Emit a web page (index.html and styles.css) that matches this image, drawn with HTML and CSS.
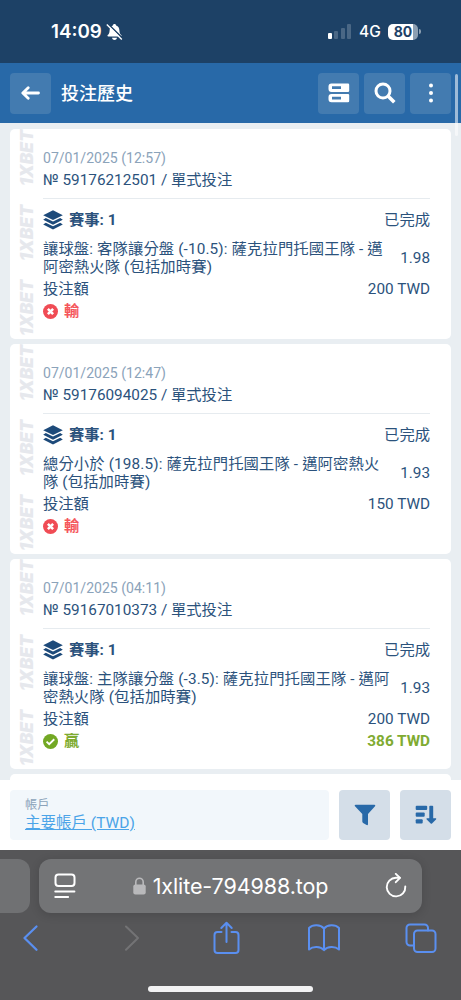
FILE: index.html
```
<!DOCTYPE html>
<html lang="zh-Hant">

<head>
    <meta charset="UTF-8">
    <meta name="viewport" content="width=device-width, initial-scale=1.0">
    <title>投注歷史</title>
    <link rel="stylesheet" href="styles.css">
</head>

<body>
    <!-- Shared icons -->
    <svg class="sprite">
        <symbol id="layers" viewBox="0 0 20 20">
            <path d="M10 .3 19.800 5.200 10 10.100.2 5.200z" />
            <path d="M2.800 8 .2 9.700 10 14.700l9.800-5L17.200 8 10 11.600z" />
            <path d="M2.800 12.700.2 14.500 10 19.500l9.800-5-2.600-1.800L10 16.300z" />
        </symbol>
        <symbol id="lost" viewBox="0 0 16 16">
            <circle cx="8" cy="8" r="8" />
            <path d="M5.200 5.200l5.600 5.600M10.800 5.200l-5.600 5.600" fill="none" stroke="#fff" stroke-width="2.700" />
        </symbol>
        <symbol id="won" viewBox="0 0 16 16">
            <circle cx="8" cy="8" r="8" />
            <path d="M3.800 8.200l2.800 2.700 5.400-5.300" fill="none" stroke="#fff" stroke-width="2" />
        </symbol>
    </svg>

    <!-- Status bar -->
    <div class="status-bar">
        <span class="clock">14:09</span>
        <svg class="bell" width="17" height="18" viewBox="0 0 17 18">
            <path d="M8.500 1c.9 0 1.500.6 1.600 1.400 2.200.7 3.200 2.600 3.300 5 .1 3 .9 3.700 1.900 4.700.5.6.2 1.500-.6 1.500H2.300c-.8 0-1.100-.9-.6-1.500 1-1 1.800-1.700 1.900-4.700.1-2.400 1.100-4.300 3.300-5C7 1.600 7.600 1 8.500 1z" fill="#fff" />
            <path d="M6 14.700h5c-.3 1.500-1.300 2.200-2.500 2.200S6.300 16.200 6 14.700z" fill="#fff" />
            <path d="M2.200 1 17 15.600" stroke="#1d4166" stroke-width="1.600" />
            <path d="M.8 1.600 15.800 16.400" stroke="#fff" stroke-width="1.400" />
        </svg>
        <div class="signal">
            <i class="bar on"></i><i class="bar b2"></i><i class="bar b3"></i><i class="bar b4"></i>
        </div>
        <span class="network">4G</span>
        <span class="battery">80</span>
        <span class="battery-tip"></span>
    </div>

    <!-- Header -->
    <div class="header">
        <button class="head-btn">
            <svg width="20" height="16" viewBox="0 0 20 16" fill="none" stroke="#fff" stroke-width="2.800" stroke-linecap="round" stroke-linejoin="round">
                <path d="M17.500 8H2.500M7.200 2.800 1.800 8l5.400 5.200" />
            </svg>
        </button>
        <h1>投注歷史</h1>
        <button class="head-btn">
            <svg width="22" height="20" viewBox="0 0 22 20" fill="#fff" fill-rule="evenodd">
                <path d="M3.500.5H20a1.200 1.200 0 0 1 1.200 1.200v6a1.200 1.200 0 0 1-1.200 1.200H3.500a3 3 0 0 1-3-3V3.500a3 3 0 0 1 3-3zM4 3.300h9v2.600H4z" />
                <path d="M3.500 10.900H20a1.200 1.200 0 0 1 1.200 1.200v6a1.200 1.200 0 0 1-1.200 1.200H3.500a3 3 0 0 1-3-3v-2.400a3 3 0 0 1 3-3zM4 13.800h9v2.600H4z" />
            </svg>
        </button>
        <button class="head-btn">
            <svg width="22" height="22" viewBox="0 0 22 22" fill="none" stroke="#fff" stroke-width="3">
                <circle cx="9" cy="9" r="7" />
                <path d="M14 14l6.300 6.300" stroke-width="3.600" />
            </svg>
        </button>
        <button class="head-btn">
            <svg width="6" height="22" viewBox="0 0 6 22" fill="#fff">
                <circle cx="3" cy="3.500" r="2" />
                <circle cx="3" cy="11" r="2" />
                <circle cx="3" cy="18.500" r="2" />
            </svg>
        </button>
        <div class="scrollbar"></div>
    </div>

    <!-- Bet list -->
    <div class="bets">
        <div class="card">
            <div class="brand"><span>1XBET</span><span>1XBET</span><span>1XBET</span></div>
            <div class="bet">
                <div class="date">07/01/2025 (12:57)</div>
                <div class="number">№ 59176212501 / 單式投注</div>
                <div class="row events">
                    <svg class="layers"><use href="#layers" /></svg>
                    <b>賽事: 1</b>
                    <span class="value">已完成</span>
                </div>
                <div class="row market">
                    <p>讓球盤: 客隊讓分盤 (-10.5): 薩克拉門托國王隊 - 邁<br>阿密熱火隊 (包括加時賽)</p>
                    <span class="value">1.98</span>
                </div>
                <div class="row">投注額<span class="value">200 TWD</span></div>
                <div class="row result lose"><svg class="mark"><use href="#lost" /></svg>輸</div>
            </div>
        </div>

        <div class="card">
            <div class="brand"><span>1XBET</span><span>1XBET</span><span>1XBET</span></div>
            <div class="bet">
                <div class="date">07/01/2025 (12:47)</div>
                <div class="number">№ 59176094025 / 單式投注</div>
                <div class="row events">
                    <svg class="layers"><use href="#layers" /></svg>
                    <b>賽事: 1</b>
                    <span class="value">已完成</span>
                </div>
                <div class="row market">
                    <p>總分小於 (198.5): 薩克拉門托國王隊 - 邁阿密熱火<br>隊 (包括加時賽)</p>
                    <span class="value">1.93</span>
                </div>
                <div class="row">投注額<span class="value">150 TWD</span></div>
                <div class="row result lose"><svg class="mark"><use href="#lost" /></svg>輸</div>
            </div>
        </div>

        <div class="card">
            <div class="brand"><span>1XBET</span><span>1XBET</span><span>1XBET</span></div>
            <div class="bet">
                <div class="date">07/01/2025 (04:11)</div>
                <div class="number">№ 59167010373 / 單式投注</div>
                <div class="row events">
                    <svg class="layers"><use href="#layers" /></svg>
                    <b>賽事: 1</b>
                    <span class="value">已完成</span>
                </div>
                <div class="row market">
                    <p>讓球盤: 主隊讓分盤 (-3.5): 薩克拉門托國王隊 - 邁阿<br>密熱火隊 (包括加時賽)</p>
                    <span class="value">1.93</span>
                </div>
                <div class="row">投注額<span class="value">200 TWD</span></div>
                <div class="row result win"><svg class="mark"><use href="#won" /></svg>贏<span class="value">386 TWD</span></div>
            </div>
        </div>

        <div class="card"></div>
    </div>

    <!-- Account / filters -->
    <div class="filters">
        <div class="account">
            <span class="label">帳戶</span>
            <a>主要帳戶 (TWD)</a>
        </div>
        <button class="filter-btn">
            <svg width="22" height="22" viewBox="0 0 22 22" fill="#2869a8">
                <path d="M1.600.8h18.800c.9 0 1.200.8.6 1.500l-7 7.700v10.200c0 .8-.7 1.200-1.400.8l-3.500-2c-.5-.3-.8-.8-.8-1.400V10L1 2.300C.4 1.600.700.8 1.600.8z" />
            </svg>
        </button>
        <button class="filter-btn">
            <svg width="22" height="20" viewBox="0 0 22 20" fill="#2869a8">
                <rect x=".7" y=".8" width="11.500" height="4.200" rx="1" />
                <rect x=".7" y="7.500" width="9" height="4.200" rx="1" />
                <rect x=".7" y="14.200" width="7" height="4.200" rx="1" />
                <path d="M14.300 1.600c0-.5.3-.8.8-.8h2.300c.5 0 .8.3.8.8v11.700h2.300c.8 0 1 .7.500 1.200l-4 4c-.4.400-.9.400-1.300 0l-4-4c-.5-.5-.2-1.200.5-1.200h2.100z" />
            </svg>
        </button>
    </div>

    <!-- Browser chrome -->
    <div class="browser">
        <div class="address-row">
            <div class="prev-tab"></div>
            <div class="address">
                <svg width="22" height="26" viewBox="0 0 22 26" fill="none" stroke="#fff" stroke-width="2" stroke-linecap="round">
                    <rect x="1.500" y="1.500" width="19" height="11.500" rx="3" />
                    <path d="M1.200 18.500h19.300M1.200 24h13" stroke-width="1.800" />
                </svg>
                <div class="url">
                    <svg width="13" height="18" viewBox="0 0 13 18">
                        <rect x=".3" y="7.500" width="12.400" height="10" rx="2" fill="#b9b9bb" />
                        <path d="M2.800 8V5a3.700 3.700 0 0 1 7.400 0v3" fill="none" stroke="#b9b9bb" stroke-width="1.600" />
                    </svg>
                    <span>1xlite-794988.top</span>
                </div>
                <svg width="22" height="26" viewBox="0 0 22 26" fill="none" stroke="#fff" stroke-width="1.900" stroke-linecap="round" stroke-linejoin="round">
                    <path d="M20.300 13.500a9.300 9.300 0 1 1-9.300-8.700h3.700" />
                    <path d="M10.800.9l4.200 4-4.200 4.300" />
                </svg>
            </div>
        </div>
        <div class="toolbar">
            <svg viewBox="0 0 32 34"><path d="M21.500 5.500 9.500 17l12 11.800" stroke-width="2.300" /></svg>
            <svg viewBox="0 0 32 34" class="off"><path d="M13 5.500 25 17 13 28.800" /></svg>
            <svg viewBox="0 0 32 34">
                <path d="M11.500 11H7.500a3 3 0 0 0-3 3v15a3 3 0 0 0 3 3h18a3 3 0 0 0 3-3V14a3 3 0 0 0-3-3h-4M16.500 21V2M11.300 7l5.200-5.200L21.700 7" />
            </svg>
            <svg viewBox="0 0 32 34">
                <path d="M16 7.500C12.500 3.500 5 3 1 7v21.500c4-3.500 11.500-3.300 15 .7 3.500-4 11-4.200 15-.7V7c-4-4-11.500-3.500-15 .5zM16 7.500v21.500" />
            </svg>
            <svg viewBox="0 0 32 34">
                <rect x="9" y="9.500" width="21.500" height="21.500" rx="3.500" />
                <path d="M9 24.500H5A3.500 3.500 0 0 1 1.500 21V7A3.500 3.500 0 0 1 5 3.500h14.500A3.500 3.500 0 0 1 23 7v2.500" />
            </svg>
        </div>
        <div class="home-indicator"></div>
    </div>
</body>

</html>
```
FILE: styles.css
```
* {
    box-sizing: border-box;
}

body {
    font-family: Roboto, "Noto Sans CJK TC", sans-serif;
    width: 461px;
    height: 1000px;
    margin: 0;
    display: flex;
    flex-direction: column;
    overflow: hidden;
    background: #e9eef2;
    color: #2b527c;
    font-size: 15.3px;
}

.sprite {
    display: none;
}

button {
    border: none;
    padding: 0;
    display: flex;
    align-items: center;
    justify-content: center;
}

/* Status bar */
.status-bar {
    height: 63px;
    flex: none;
    display: flex;
    align-items: center;
    padding: 0 40px 0 51px;
    background: #1d4166;
    color: white;
    font-family: Inter, sans-serif;
}

.clock {
    font-size: 18.8px;
    font-weight: 600;
    width: 51px;
    white-space: nowrap;
}

.bell {
    margin-left: 4px;
}

.signal {
    display: flex;
    align-items: flex-end;
    gap: 2.5px;
    height: 15px;
    margin-left: auto;
}

.bar {
    width: 4px;
    height: 6px;
    border-radius: 1px;
    background: #4a6785;
}

.bar.on {
    background: white;
}

.b2 {
    height: 8px;
}

.b3 {
    height: 11px;
}

.b4 {
    height: 15px;
}

.network {
    margin-left: 8px;
    width: 21px;
    font-size: 15.5px;
    font-weight: 500;
}

.battery {
    width: 30px;
    height: 16px;
    margin-left: 8px;
    border-radius: 5px;
    background: linear-gradient(90deg, white 25px, #8c9fb2 25px);
    color: #1d4166;
    font-size: 14px;
    font-weight: 700;
    line-height: 16px;
    text-align: center;
}

.battery-tip {
    width: 2px;
    height: 5px;
    margin-left: 1px;
    border-radius: 0 2px 2px 0;
    background: #8c9fb2;
}

/* Header */
.header {
    position: relative;
    height: 60px;
    flex: none;
    display: flex;
    align-items: center;
    gap: 5px;
    padding: 0 10px;
    background: #2869a8;
}

.head-btn {
    width: 41px;
    height: 41px;
    border-radius: 4px;
    background: #437bb0;
}

h1 {
    flex: 1;
    margin: 1px 0 0 5px;
    color: white;
    font-size: 18px;
    font-weight: 500;
    line-height: 24px;
}

.scrollbar {
    position: absolute;
    right: 3px;
    top: 11px;
    width: 3px;
    height: 62px;
    border-radius: 2px;
    background: rgba(255, 255, 255, 0.55);
}

/* Bet list */
.bets {
    height: 657px;
    flex: none;
    display: flex;
    flex-direction: column;
    gap: 5px;
    padding: 6px 10px 0;
    overflow: hidden;
}

.card {
    display: flex;
    flex: none;
    height: 210px;
    border-radius: 5px;
    background: white;
    overflow: hidden;
}

.brand {
    width: 33px;
    flex: none;
    padding: 1px 9px 0 10px;
}

.brand span {
    display: flex;
    align-items: center;
    justify-content: flex-end;
    width: 14px;
    height: 75px;
    writing-mode: vertical-rl;
    transform: rotate(180deg);
    color: #e6e8ed;
    font-family: Inter, sans-serif;
    font-size: 17.5px;
    font-weight: 900;
    font-style: italic;
    line-height: 14px;
}

.bet {
    flex: 1;
    padding: 19px 21px 0 0;
}

.date {
    color: #8ba3ba;
    font-size: 14.05px;
    line-height: 21px;
}

.number {
    height: 30px;
    line-height: 22px;
    border-bottom: 1px solid #e6ebef;
}

.row {
    display: flex;
    align-items: center;
    height: 22px;
    line-height: 22px;
}

.row .value {
    margin-left: auto;
    white-space: nowrap;
}

.events {
    height: 24px;
    margin-top: 9px;
}

.events b {
    font-weight: 700;
}

.layers {
    width: 20px;
    height: 20px;
    margin-right: 6px;
    fill: #1d4a7a;
}

.market {
    height: 35px;
    margin: 9px 0 2px;
    line-height: 17.5px;
}

.market p {
    margin: 0;
    letter-spacing: 0.14px;
    white-space: nowrap;
}

.result {
    font-weight: 700;
}

.mark {
    width: 15px;
    height: 15px;
    margin-right: 6px;
}

.lose {
    color: #f5565b;
    fill: #f04c55;
}

.win {
    color: #80ab31;
    fill: #73a824;
}

/* Account / filters */
.filters {
    height: 70px;
    flex: none;
    display: flex;
    gap: 10px;
    padding: 10px;
    background: white;
}

.account {
    flex: 1;
    display: flex;
    flex-direction: column;
    padding: 6px 15px 0;
    border-radius: 4px;
    background: #f2f7fb;
}

.account .label {
    color: #8ba3ba;
    font-size: 12.3px;
    line-height: 18px;
}

.account a {
    color: #4ba4e8;
    font-size: 15.5px;
    text-decoration: underline;
    line-height: 19px;
}

.filter-btn {
    width: 51px;
    height: 50px;
    border-radius: 4px;
    background: #d4dee8;
}

/* Browser chrome */
.browser {
    flex: 1;
    display: flex;
    flex-direction: column;
    background: #565658;
}

.address-row {
    display: flex;
    gap: 9px;
    margin-top: 9px;
}

.prev-tab {
    width: 30px;
    height: 54px;
    border-radius: 0 12px 12px 0;
    background: #707173;
}

.address {
    width: 383px;
    height: 54px;
    display: flex;
    align-items: center;
    justify-content: space-between;
    padding: 0 15px;
    border-radius: 12px;
    background: #737476;
    box-shadow: 0 2px 10px rgba(0, 0, 0, 0.15);
}

.url {
    display: flex;
    align-items: center;
    gap: 7px;
    color: white;
    font-family: Inter, sans-serif;
    font-size: 21.5px;
    letter-spacing: -0.1px;
}

.toolbar {
    display: flex;
    justify-content: space-between;
    margin-top: 8px;
    padding: 0 24px 0 15px;
}

.toolbar svg {
    width: 32px;
    height: 34px;
    fill: none;
    stroke: #5a8ff0;
    stroke-width: 2;
    stroke-linecap: round;
    stroke-linejoin: round;
}

.toolbar .off {
    stroke: #737375;
}

.home-indicator {
    width: 165px;
    height: 6px;
    margin: auto auto 8px;
    border-radius: 3px;
    background: #f2f2f3;
}
```
